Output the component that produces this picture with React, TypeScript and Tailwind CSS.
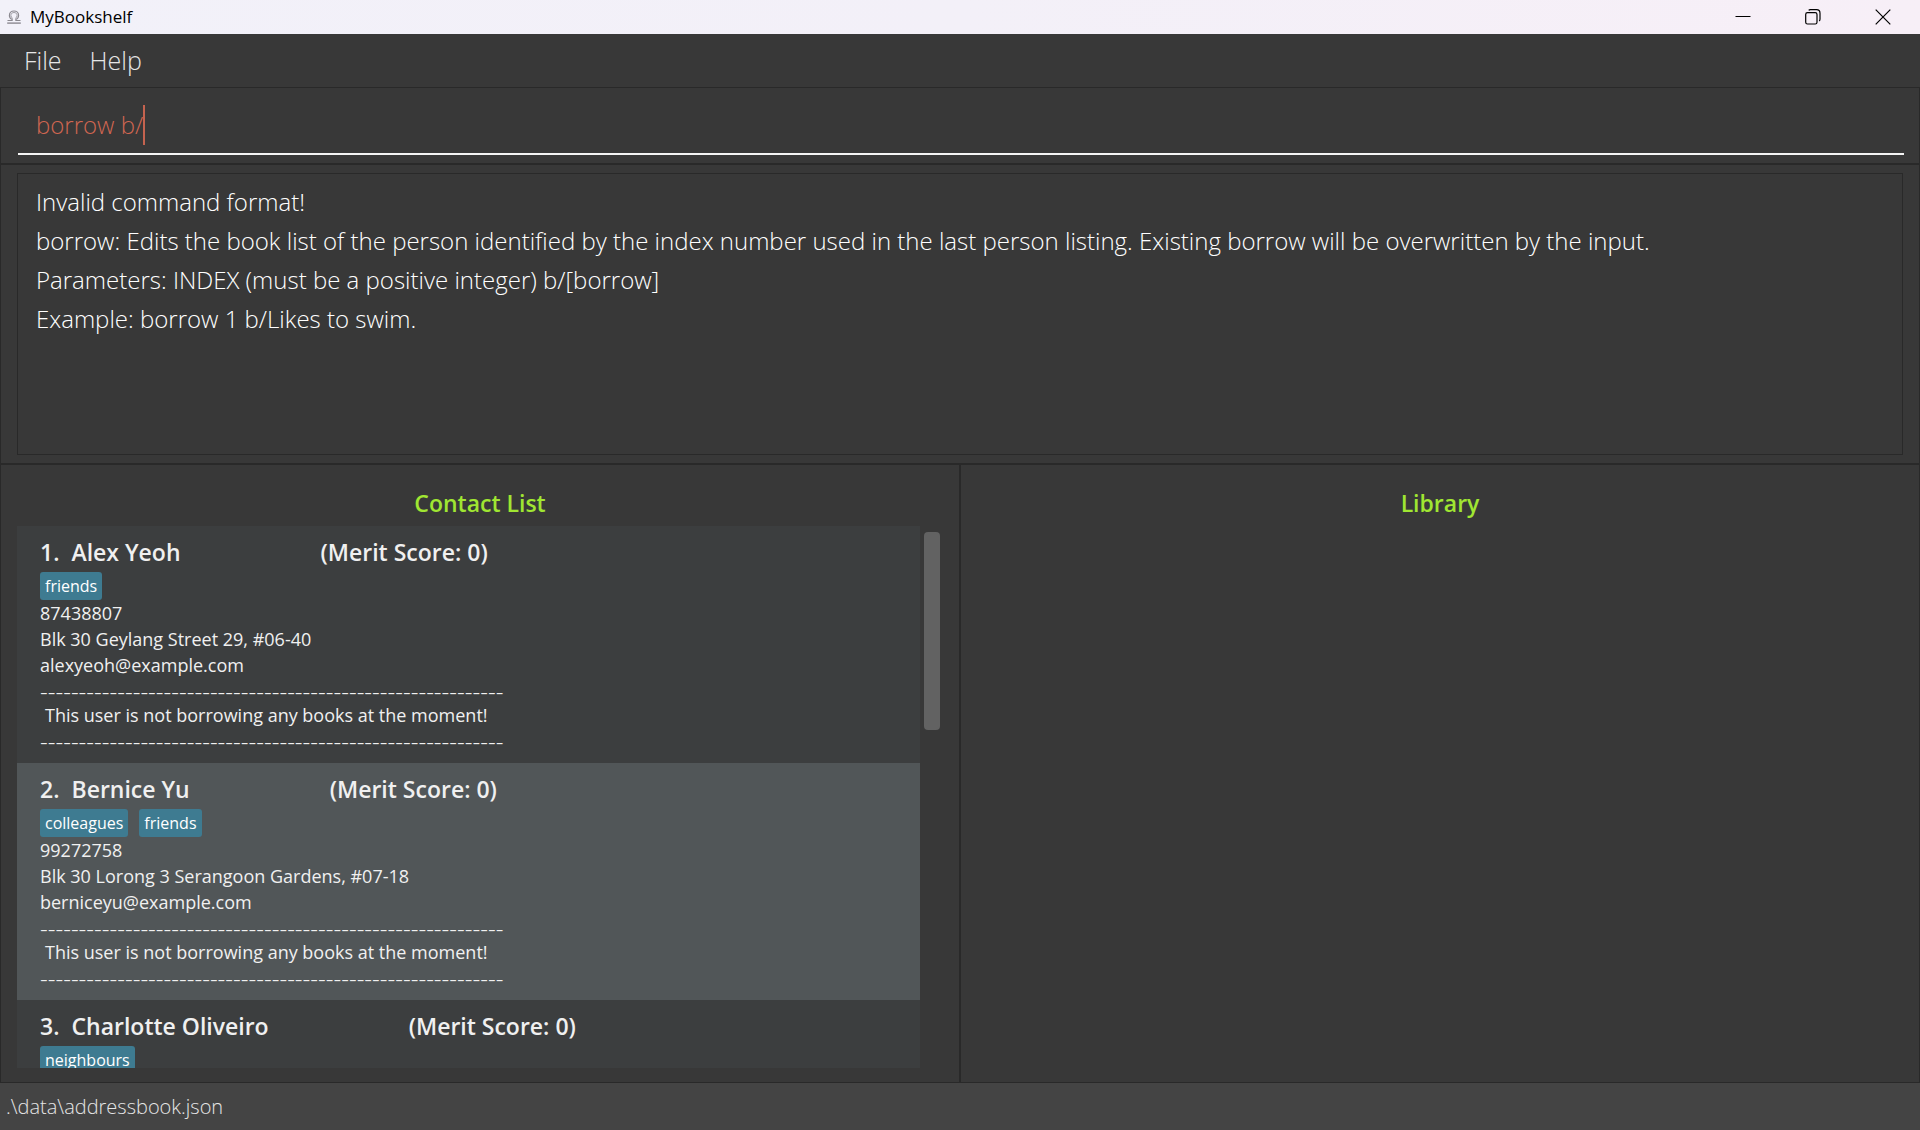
import { useState } from 'react';

type Contact = {
  name: string;
  merit: number;
  tags: string[];
  details?: string[];
};

const contacts: Contact[] = [
  {
    name: 'Alex Yeoh',
    merit: 0,
    tags: ['friends'],
    details: ['87438807', 'Blk 30 Geylang Street 29, #06-40', 'alexyeoh@example.com'],
  },
  {
    name: 'Bernice Yu',
    merit: 0,
    tags: ['colleagues', 'friends'],
    details: ['99272758', 'Blk 30 Lorong 3 Serangoon Gardens, #07-18', 'berniceyu@example.com'],
  },
  {
    name: 'Charlotte Oliveiro',
    merit: 0,
    tags: ['neighbours'],
  },
];

const resultLines = [
  'Invalid command format!',
  'borrow: Edits the book list of the person identified by the index number used in the last person listing. Existing borrow will be overwritten by the input.',
  'Parameters: INDEX (must be a positive integer) b/[borrow]',
  'Example: borrow 1 b/Likes to swim.',
];

function AppIcon() {
  return (
    <svg viewBox="0 0 16 16" className="size-4" fill="none" stroke="#8b8990" aria-hidden="true">
      <path
        d="M1.5 11.5h4.6V10.2A4.2 4.2 0 0 1 3.4 6.4C3.4 3.8 5.4 2 8 2s4.6 1.8 4.6 4.4a4.2 4.2 0 0 1-2.7 3.800v1.300h4.600"
        strokeWidth="1.2"
      />
      <path
        d="M6.8 9.4A3.2 3.2 0 0 1 4.9 6.5C4.9 4.7 6.2 3.5 8 3.500s3.100 1.200 3.100 3a3.200 3.200 0 0 1-1.900 2.900"
        strokeWidth="0.8"
      />
      <path d="M1.2 14.100h13.600" strokeWidth="1.400" />
    </svg>
  );
}

function TitleBar() {
  return (
    <header className="flex h-[34px] shrink-0 items-center bg-linear-to-r from-[#f2f1f9] via-[#f3f0f8] to-[#f7eff7] pr-0.5 pl-1.5 text-black">
      <AppIcon />
      <h1 className="ml-2 flex-1 text-[17px] leading-6">MyBookshelf</h1>
      <button type="button" aria-label="Minimize" className="flex h-full w-[70px] items-center justify-center">
        <svg viewBox="0 0 16 16" className="size-4" fill="none" stroke="currentColor" aria-hidden="true">
          <path d="M0.5 7.5h15" />
        </svg>
      </button>
      <button type="button" aria-label="Restore" className="flex h-full w-[70px] items-center justify-center">
        <svg viewBox="0 0 16 16" className="size-4" fill="none" stroke="currentColor" strokeWidth="1.2" aria-hidden="true">
          <rect x="0.7" y="3.7" width="11.3" height="11.3" rx="1.8" />
          <path d="M3.7 1.4Q4.2 0.7 5.4 0.7H11.5Q15 0.7 15 4.2V10Q15 11.4 14.2 12" />
        </svg>
      </button>
      <button type="button" aria-label="Close" className="flex h-full w-[70px] items-center justify-center">
        <svg viewBox="0 0 16 16" className="size-4" fill="none" stroke="currentColor" strokeWidth="1.2" aria-hidden="true">
          <path d="M0.7 0.7l14.600 14.600M15.300 0.7L0.7 15.300" />
        </svg>
      </button>
    </header>
  );
}

function DashedRule() {
  return (
    <p className="text-[24px] leading-[25px] font-light" aria-hidden="true">
      {'-'.repeat(60)}
    </p>
  );
}

function ContactCard({ contact, index }: { contact: Contact; index: number }) {
  return (
    <li className="bg-[#3c3e3f] px-[23px] pt-2 pb-2.5 even:bg-[#515658]">
      <h3 className="mb-0.5 flex text-[23px] leading-9 font-semibold text-[#f0f0f0]">
        <span className="mr-3">{index}.</span>
        <span className="mr-[140px]">{contact.name}</span>
        <span>(Merit Score: {contact.merit})</span>
      </h3>
      <div className="flex gap-[11px]">
        {contact.tags.map((tag) => (
          <span key={tag} className="rounded-[3px] bg-[#3e7b91] px-[5px] text-[16px] leading-7 text-white">
            {tag}
          </span>
        ))}
      </div>
      {contact.details && (
        <div className="text-[18px] leading-[26px] text-[#f0f0f0]">
          {contact.details.map((line) => (
            <p key={line}>{line}</p>
          ))}
          <DashedRule />
          <p className="pl-[5px] leading-[25px]">This user is not borrowing any books at the moment!</p>
          <DashedRule />
        </div>
      )}
    </li>
  );
}

export default function App() {
  const [command, setCommand] = useState('borrow b/');

  return (
    <div className="flex h-screen flex-col overflow-hidden bg-[#383838] font-['Open_Sans','Noto_Sans',sans-serif]">
      <TitleBar />

      <nav className="flex h-[53px] shrink-0 items-start gap-7 pt-2 pl-6 text-[25px] leading-9 font-light text-[#e6e6e6]">
        <button type="button">File</button>
        <button type="button">Help</button>
      </nav>

      <section className="shrink-0 border border-[#292929] pt-[17px] pr-[15px] pb-2 pl-[17px]">
        <label className="flex items-center border-b-2 border-[#f4f4f4] pb-2 pl-[18px]">
          <span className="sr-only">Command</span>
          <input
            type="text"
            value={command}
            onChange={(e) => setCommand(e.target.value)}
            className="field-sizing-content bg-transparent text-[24px] leading-10 font-light text-[#d06651] caret-transparent outline-none"
          />
          <span className="h-10 w-0.5 bg-[#c4634f]" />
        </label>
      </section>

      <section className="h-[300px] shrink-0 border border-[#292929] px-4 py-2">
        <div className="h-full border border-[#292929] px-[18px] py-2 text-[24px] leading-[39px] font-light text-white">
          {resultLines.map((line) => (
            <p key={line}>{line}</p>
          ))}
        </div>
      </section>

      <main className="grid min-h-0 flex-1 grid-cols-2">
        <section className="flex min-h-0 flex-col border border-[#292929] pt-5 pb-3.5 pl-4">
          <h2 className="mb-[5px] pr-4 text-center text-[23px] leading-9 font-semibold text-[#a0e632]">Contact List</h2>
          <div className="flex min-h-0 flex-1 gap-1 pr-[19px]">
            <ol className="min-w-0 flex-1 overflow-hidden">
              {contacts.map((c, i) => (
                <ContactCard key={c.name} contact={c} index={i + 1} />
              ))}
            </ol>
            <div className="w-4 py-1.5">
              <div className="h-[198px] rounded bg-[#626262]" />
            </div>
          </div>
        </section>
        <section className="border border-[#292929] pt-5">
          <h2 className="text-center text-[23px] leading-9 font-semibold text-[#a0e632]">Library</h2>
        </section>
      </main>

      <footer className="flex h-[47px] shrink-0 items-center bg-[#444444] px-1.5 text-[20px] leading-7 font-light text-[#e6e6e6]">
        .\data\addressbook.json
      </footer>
    </div>
  );
}
